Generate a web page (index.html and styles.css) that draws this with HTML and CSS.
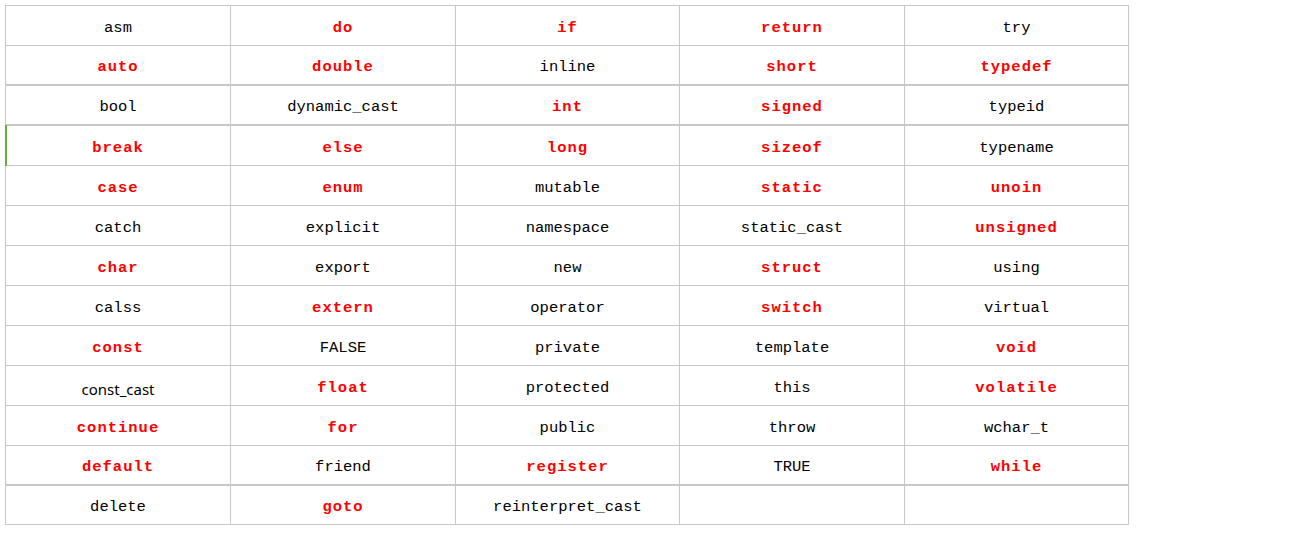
FILE: index.html
```html
<!DOCTYPE html>
<html>
<head>
<meta charset="utf-8">
<link rel="stylesheet" href="styles.css">
</head>
<body>
<div class="grid">
  <div class="c">asm</div><div class="c k">do</div><div class="c k">if</div><div class="c k">return</div><div class="c">try</div>
  <div class="c k thick">auto</div><div class="c k thick">double</div><div class="c thick">inline</div><div class="c k thick">short</div><div class="c k thick">typedef</div>
  <div class="c thick">bool</div><div class="c thick">dynamic_cast</div><div class="c k thick">int</div><div class="c k thick">signed</div><div class="c thick">typeid</div>
  <div class="c k mark">break</div><div class="c k">else</div><div class="c k">long</div><div class="c k">sizeof</div><div class="c">typename</div>
  <div class="c k">case</div><div class="c k">enum</div><div class="c">mutable</div><div class="c k">static</div><div class="c k">unoin</div>
  <div class="c">catch</div><div class="c">explicit</div><div class="c">namespace</div><div class="c">static_cast</div><div class="c k">unsigned</div>
  <div class="c k">char</div><div class="c">export</div><div class="c">new</div><div class="c k">struct</div><div class="c">using</div>
  <div class="c">calss</div><div class="c k">extern</div><div class="c">operator</div><div class="c k">switch</div><div class="c">virtual</div>
  <div class="c k">const</div><div class="c">FALSE</div><div class="c">private</div><div class="c">template</div><div class="c k">void</div>
  <div class="c sans">const_cast</div><div class="c k">float</div><div class="c">protected</div><div class="c">this</div><div class="c k">volatile</div>
  <div class="c k">continue</div><div class="c k">for</div><div class="c">public</div><div class="c">throw</div><div class="c">wchar_t</div>
  <div class="c k thick">default</div><div class="c thick">friend</div><div class="c k thick">register</div><div class="c thick">TRUE</div><div class="c k thick">while</div>
  <div class="c last">delete</div><div class="c k last">goto</div><div class="c last">reinterpret_cast</div><div class="c last"></div><div class="c last"></div>
</div>
</body>
</html>
```

FILE: styles.css
```css
html, body {
  margin: 0;
  padding: 0;
  background: #ffffff;
}
body {
  padding: 5px 0 0 5px;
}
.grid {
  display: grid;
  grid-template-columns: 225px 225px 224px 225px 224px;
  width: max-content;
  border-top: 1px solid #c8c8c8;
  border-left: 1px solid #c8c8c8;
}
.c {
  position: relative;
  box-sizing: border-box;
  height: 40px;
  border-right: 1px solid #c8c8c8;
  border-bottom: 1px solid #c8c8c8;
  display: flex;
  align-items: center;
  justify-content: center;
  padding-top: 4px;
  font-family: "Liberation Mono", "DejaVu Sans Mono", monospace;
  font-size: 15.5px;
  color: #000000;
}
.k {
  color: #ff0000;
  font-weight: bold;
  letter-spacing: 1px;
}
.thick {
  border-bottom: 2px solid #c8c8c8;
}
.last {
  height: 39px;
}
.sans {
  font-family: "Noto Sans", "DejaVu Sans", sans-serif;
  font-size: 15px;
  padding-top: 7px;
}
.mark::before {
  content: "";
  position: absolute;
  left: -1px;
  top: -1px;
  width: 2px;
  height: 41px;
  background: #6aad3d;
}
```
